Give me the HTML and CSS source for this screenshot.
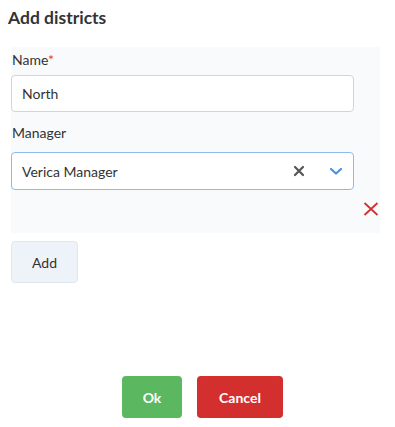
FILE: index.html
```html
<!DOCTYPE html>
<html lang="en">
<head>
  <meta charset="UTF-8">
  <title>Add districts</title>
  <link rel="stylesheet" href="styles.css">
</head>
<body>
  <div class="dialog">
    <h2 class="dialog-title">Add districts</h2>

    <div class="district-card">
      <label class="field-label">Name<span class="req">*</span></label>
      <input class="text-input" type="text" value="North">

      <label class="field-label manager-label">Manager</label>
      <div class="select-box">
        <span class="select-value">Verica Manager</span>
        <span class="select-clear">
          <svg width="12" height="12" viewBox="0 0 12 12"><path d="M2 2L10 10M10 2L2 10" stroke="#555" stroke-width="2.2" stroke-linecap="round"/></svg>
        </span>
        <span class="select-arrow">
          <svg width="14" height="10" viewBox="0 0 14 10"><path d="M2 3L7 7.5L12 3" fill="none" stroke="#4a90e2" stroke-width="2.2" stroke-linecap="round" stroke-linejoin="round"/></svg>
        </span>
      </div>

      <div class="card-actions">
        <button class="remove-btn">
          <svg width="16" height="14" viewBox="0 0 16 14"><path d="M1.5 1L14.5 13M14.5 1L1.5 13" stroke="#d32f2f" stroke-width="1.8"/></svg>
        </button>
      </div>
    </div>

    <button class="add-btn">Add</button>

    <div class="dialog-footer">
      <button class="btn btn-ok">Ok</button>
      <button class="btn btn-cancel">Cancel</button>
    </div>
  </div>
</body>
</html>
```

FILE: styles.css
```css
* { margin: 0; padding: 0; box-sizing: border-box; }
body { font-family: 'Lato', 'Open Sans', sans-serif; background: #fff; color: #333; width: 395px; height: 427px; overflow: hidden; }
.dialog { padding: 8px 15px 0 11px; display: flex; flex-direction: column; height: 427px; }
.dialog-title { font-size: 17.5px; font-weight: bold; color: #333; margin-left: -3px; height: 39px; line-height: 20px; }
.district-card { background: #f9fafc; padding: 4px 0 6px 0; display: flex; flex-direction: column; width: 369px; }
.field-label { font-size: 14px; color: #333; line-height: 17px; padding-left: 1px; margin-bottom: 7px; }
.field-label .req { color: #e53935; }
.manager-label { margin-top: 12px; margin-bottom: 11px; }
.text-input { width: 343px; height: 37px; border: 1px solid #d4d4d4; border-radius: 4px; padding: 0 10px; font-family: inherit; font-size: 14px; color: #333; background: #fff; outline: none; }
.select-box { width: 343px; height: 38px; border: 1px solid #8fb9ea; border-radius: 4px; background: #fff; display: flex; align-items: center; padding: 0 10px; }
.select-value { flex: 1; font-size: 14px; color: #333; }
.select-clear { display: flex; margin-right: 24px; }
.select-arrow { display: flex; margin-right: 0; }
.card-actions { display: flex; justify-content: flex-end; padding: 12px 1px 0 0; height: 37px; }
.remove-btn { background: none; border: none; cursor: pointer; display: flex; height: 14px; }
.add-btn { margin-top: 8px; width: 67px; height: 42px; background: #eef2f9; border: 1px solid #e2e6ee; border-radius: 4px; font-family: inherit; font-size: 14px; color: #333; cursor: pointer; }
.dialog-footer { display: flex; justify-content: center; gap: 15px; margin-top: 93px; padding-left: 14px; }
.btn { height: 42px; border: none; border-radius: 4px; color: #fff; font-family: inherit; font-size: 14px; font-weight: bold; cursor: pointer; }
.btn-ok { width: 60px; background: #5cb860; }
.btn-cancel { width: 86px; background: #d32f2f; }
```
